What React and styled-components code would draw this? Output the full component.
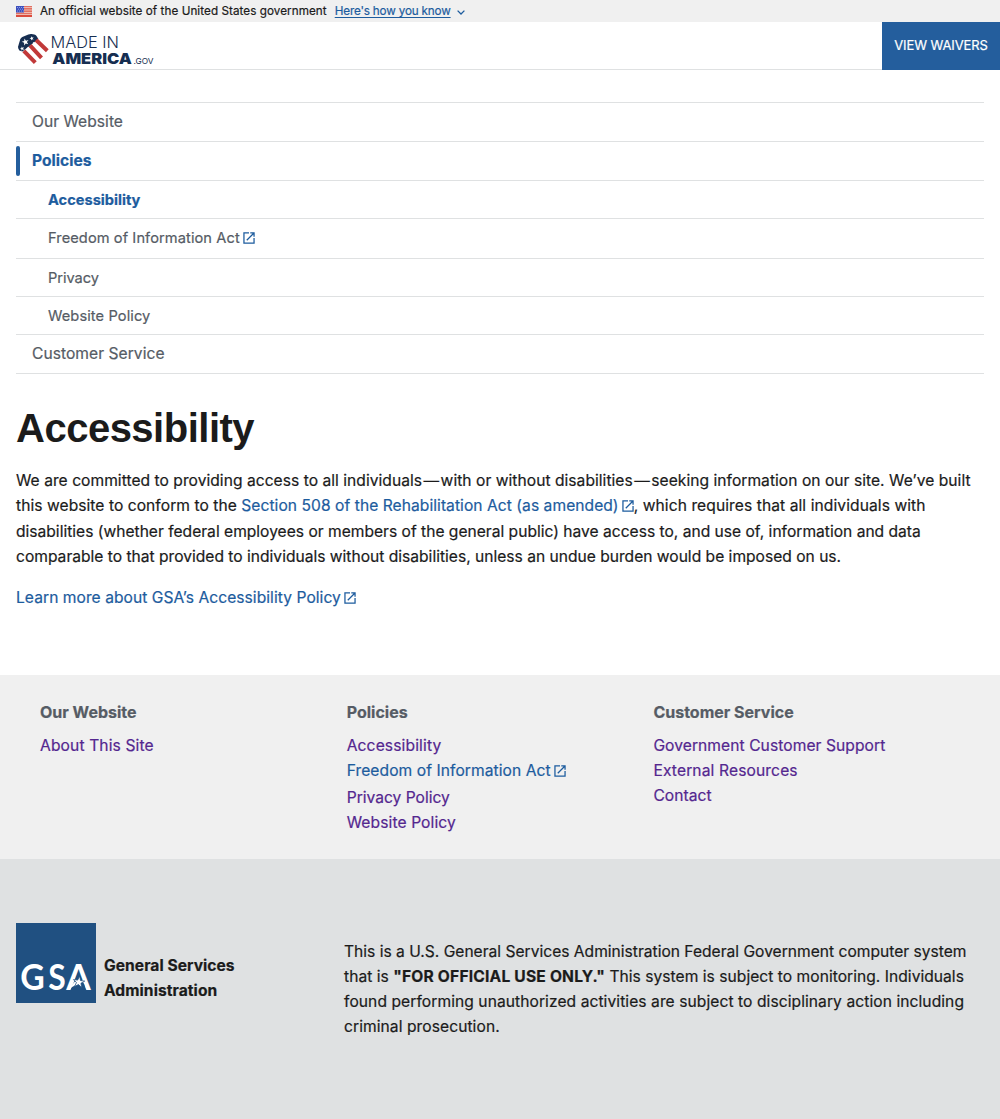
import React from 'react';
import styled, { createGlobalStyle } from 'styled-components';

const Global = createGlobalStyle`
  * { box-sizing: border-box; }
  body { margin: 0; background: #fff; color: #1b1b1b; font-family: Inter, "Liberation Sans", sans-serif; font-size: 15.6px; -webkit-text-stroke: 0.2px; }
  a { color: #1d5c9e; text-decoration: none; }
  ul { list-style: none; margin: 0; padding: 0; }
  svg, h1 { -webkit-text-stroke: 0; }
`;

const Banner = styled.div`
  display: flex; align-items: center; height: 22px; padding: 0 16px;
  background: #f0f0f0; font-size: 11.7px; line-height: 22px;
`;
const Flag = styled.svg`width: 16px; height: 11px; margin-right: 8px;`;
const T = styled.span`letter-spacing: ${p => p.$ls || 0}px; white-space: pre;`;
const BannerLink = styled.a`
  margin-left: 8px; letter-spacing: -0.17px; text-decoration: underline;
  text-underline-offset: 2px; text-decoration-thickness: 1px; text-decoration-skip-ink: none;
`;
const Chevron = styled.svg`width: 8px; height: 5px; margin: 3px 0 0 6px;`;

const Header = styled.header`
  display: flex; justify-content: space-between; height: 48px;
  border-bottom: 1px solid #dfe1e2; padding-left: 16px;
`;
const Logo = styled.svg`width: 142px; height: 47px;`;
const Waivers = styled.a`
  display: flex; align-items: center; justify-content: center; width: 118px; height: 48px;
  && { color: #fff; } background: #245e9d; font-size: 13px; letter-spacing: -0.1px;
  padding-bottom: 2px;
`;

const Main = styled.main`padding: 32px 16px 0; height: 605px;`;
const SideNav = styled.ul`&& { border-bottom: 1px solid #dfe1e2; }`;
const NavItem = styled.li`
  display: flex; align-items: center; height: ${p => p.$h || 39}px; padding-bottom: ${p => (p.$h === 38 ? 0 : 2)}px;
  border-top: 1px solid #dfe1e2; padding-left: ${p => (p.$sub ? 32 : 16)}px;
  font-size: ${p => (p.$sub ? 14.625 : 15.6)}px; letter-spacing: ${p => p.$ls || 0}px;
  a { color: ${p => (p.$active ? '#1d5c9e' : '#565c65')}; font-weight: ${p => (p.$active ? 700 : 400)}; }
`;
const CurrentItem = styled(NavItem)`
  padding-left: 0;
  &::before { content: ''; width: 4px; height: 30px; margin: 2px 12px 0 0; border-radius: 2px; background: #245e9d; }
`;
const Title = styled.h1`
  margin: 30px 0 0; font: 700 40px/48px "Liberation Sans", Arial, sans-serif;
  letter-spacing: -0.5px; height: 64px;
`;
const Copy = styled.p`margin: 0 0 15.4px; line-height: 25.4px;`;
const Line = styled.span`display: block; height: 25.4px; white-space: pre; letter-spacing: ${p => p.$ls || 0}px;`;
const Icon = styled.svg`
  width: 12px; height: 12px; margin-left: 3px; vertical-align: -1px; fill: #1d5c9e; flex: none;
`;

const LinksArea = styled.nav`
  display: grid; grid-template-columns: repeat(3, 306.7px); height: 184px; padding: 25px 40px 0; background: #f0f0f0;
`;
const Heading = styled.h2`
  margin: 0 0 8px; font-size: 16px; line-height: 25px; color: #565c65;
`;
const FootItem = styled.li`
  height: ${p => p.$h || 25}px; line-height: 25px; letter-spacing: ${p => p.$ls || 0}px; white-space: nowrap;
  a { color: ${p => (p.$external ? '#1d5c9e' : '#54278f')}; }
`;
const Identifier = styled.footer`
  display: grid; grid-template-columns: 328px 1fr; height: 260px; padding: 64px 16px 0; background: #dfe1e2;
`;
const Agency = styled.div`display: flex; gap: 8px;`;
const GsaMark = styled.svg`width: 80px; height: 80px;`;
const AgencyName = styled.strong`padding-top: 30px; line-height: 25px;`;
const Notice = styled.p`margin: 16px 0 0; line-height: 25px;`;
const NoticeLine = styled(Line)`height: 25px;`;

const External = () => (
  <Icon viewBox="2.5 2.5 19 19" aria-hidden="true">
    <path d="M19 19H5V5h7V3H3v18h18v-9h-2v7zM14 3v2h3.59l-9.83 9.83 1.41 1.41L19 6.41V10h2V3h-7z" />
  </Icon>
);

const STAR = '0,-1 .24,-.32 .95,-.31 .38,.12 .59,.81 0,.4 -.59,.81 -.38,.12 -.95,-.31 -.24,-.32';

function SiteLogo() {
  return (
    <Logo viewBox="16 22 142 47" aria-label="Made in America">
      <path d="M20.3 39.2Q20.8 37.7 22.3 37L28.3 34.5Q30 33.8 31.6 34L34.3 34.5Q35.7 34.8 36.5 36L38.4 39L22.4 51.5L19.4 50.6Q17.9 48.5 18 46.8Z" fill="#162e51" />
      <path d="M36.1 40L47.3 50.7M30 45.3L41.5 57.8M23.8 50.8L35.3 62.7" stroke="#c13939" strokeWidth="4" fill="none" />
      <path d="M33.2 42.5L44.4 54.2M27 47.8L38.5 60.2" stroke="#fff" strokeWidth="1.4" />
      <g fill="#fff">
        <polygon points={STAR} transform="translate(25.4 42) rotate(-15) scale(3.7)" />
        <polygon points={STAR} transform="translate(31.8 38.4) rotate(-15) scale(2.3)" />
        <polygon points={STAR} transform="translate(22.2 48.6) rotate(-15) scale(2.3)" />
      </g>
      <g fill="#162e51" fontFamily="Inter, sans-serif">
        <text x="50.5" y="47.6" fontSize="15.2" fontWeight="350" textLength="68.5" lengthAdjust="spacingAndGlyphs">MADE IN</text>
        <text x="52.3" y="64" fontSize="15.2" fontWeight="900" textLength="79.5" lengthAdjust="spacingAndGlyphs">AMERICA</text>
        <text x="133.5" y="64" fontSize="8.2" textLength="20" lengthAdjust="spacingAndGlyphs">.GOV</text>
      </g>
    </Logo>
  );
}

export default function App() {
  return (
    <>
      <Global />
      <Banner>
        <Flag viewBox="0 0 16 11" aria-label="U.S. flag">
          <rect width="16" height="11" fill="#f5ded5" />
          <path d="M0 .7H16M0 2.9H16M0 5.1H16M0 7.3H16M0 9.4H16M0 10.6H16" stroke="#db4b3d" strokeWidth="1.1" />
          <rect width="8" height="6.5" fill="#3c50bd" />
          <path d="M1 1.5H8M2 3.2H8M1 5H8" stroke="#a5b0ed" strokeWidth=".8" strokeDasharray="1 1" />
        </Flag>
        <T $ls={0.058}>An official website of the United States government</T>
        <BannerLink href="#">Here's how you know</BannerLink>
        <Chevron viewBox="0 0 8 5"><path d="M.6.6L4 4L7.4.6" fill="none" stroke="#1d5c9e" strokeWidth="1.3" /></Chevron>
      </Banner>
      <Header>
        <SiteLogo />
        <Waivers href="#">VIEW WAIVERS</Waivers>
      </Header>
      <Main>
        <SideNav>
          <NavItem $ls={0.03}><a href="#">Our Website</a></NavItem>
          <CurrentItem $active><a href="#">Policies</a></CurrentItem>
          <NavItem $sub $active $h={38}><a href="#">Accessibility</a></NavItem>
          <NavItem $sub $h={40} $ls={0.09}><a href="#">Freedom of Information Act<External /></a></NavItem>
          <NavItem $sub $h={38} $ls={-0.04}><a href="#">Privacy</a></NavItem>
          <NavItem $sub $h={38} $ls={0.1}><a href="#">Website Policy</a></NavItem>
          <NavItem $ls={0.04}><a href="#">Customer Service</a></NavItem>
        </SideNav>
        <Title>Accessibility</Title>
        <Copy>
          <Line $ls={0.035}>We are committed to providing access to all individuals{'\u200a—\u200a'}with or without disabilities{'\u200a—\u200a'}seeking information on our site. We’ve built</Line>
          <Line $ls={0.05}>this website to conform to the <a href="#">Section 508 of the Rehabilitation Act (as amended)<External /></a><T $ls={0.08}>, which requires that all individuals with</T></Line>
          <Line>disabilities (whether federal employees or members of the general public) have access to, and use of, information and data</Line>
          <Line>comparable to that provided to individuals without disabilities, unless an undue burden would be imposed on us.</Line>
        </Copy>
        <Copy><Line $ls={0.05}><a href="#">Learn more about GSA’s Accessibility Policy<External /></a></Line></Copy>
      </Main>
      <LinksArea>
        <section>
          <Heading>Our Website</Heading>
          <ul><FootItem $ls={0.13}><a href="#">About This Site</a></FootItem></ul>
        </section>
        <section>
          <Heading>Policies</Heading>
          <ul>
            <FootItem $ls={0.13}><a href="#">Accessibility</a></FootItem>
            <FootItem $external $h={27} $ls={0.07}><a href="#">Freedom of Information Act<External /></a></FootItem>
            <FootItem><a href="#">Privacy Policy</a></FootItem>
            <FootItem $ls={0.1}><a href="#">Website Policy</a></FootItem>
          </ul>
        </section>
        <section>
          <Heading>Customer Service</Heading>
          <ul>
            <FootItem $ls={0.07}><a href="#">Government Customer Support</a></FootItem>
            <FootItem $ls={0.13}><a href="#">External Resources</a></FootItem>
            <FootItem $ls={0.05}><a href="#">Contact</a></FootItem>
          </ul>
        </section>
      </LinksArea>
      <Identifier>
        <Agency>
          <GsaMark viewBox="0 0 80 80" aria-label="GSA">
            <rect width="80" height="80" fill="#205081" />
            <g fill="#fff" fontFamily="Lato, sans-serif" fontWeight="700" fontSize="36">
              <text x="4.2" y="67" textLength="24.5" lengthAdjust="spacingAndGlyphs">G</text>
              <text x="32.3" y="67" textLength="17.5" lengthAdjust="spacingAndGlyphs">S</text>
              <text x="50.2" y="67" textLength="24.5" lengthAdjust="spacingAndGlyphs">A</text>
            </g>
            <polygon points="62.5,49 66,57 68,61 70,67 54.5,67 57,61" fill="#205081" />
            <path d="M51 67L62.3 60.6L59 58.5Z" fill="#fff" />
            <polygon points={STAR} transform="translate(62.8 59.2) rotate(8) scale(6)" fill="#fff" stroke="#205081" strokeWidth=".12" />
          </GsaMark>
          <AgencyName><Line $ls={0.04}>General Services</Line><Line $ls={0.07}>Administration</Line></AgencyName>
        </Agency>
        <Notice>
          <NoticeLine>This is a U.S. General Services Administration Federal Government computer system</NoticeLine>
          <NoticeLine $ls={0.03}>that is <strong><T $ls={0.19}>"FOR OFFICIAL USE ONLY."</T></strong> This system is subject to monitoring. Individuals</NoticeLine>
          <NoticeLine $ls={0.07}>found performing unauthorized activities are subject to disciplinary action including</NoticeLine>
          <NoticeLine $ls={0.07}>criminal prosecution.</NoticeLine>
        </Notice>
      </Identifier>
    </>
  );
}
